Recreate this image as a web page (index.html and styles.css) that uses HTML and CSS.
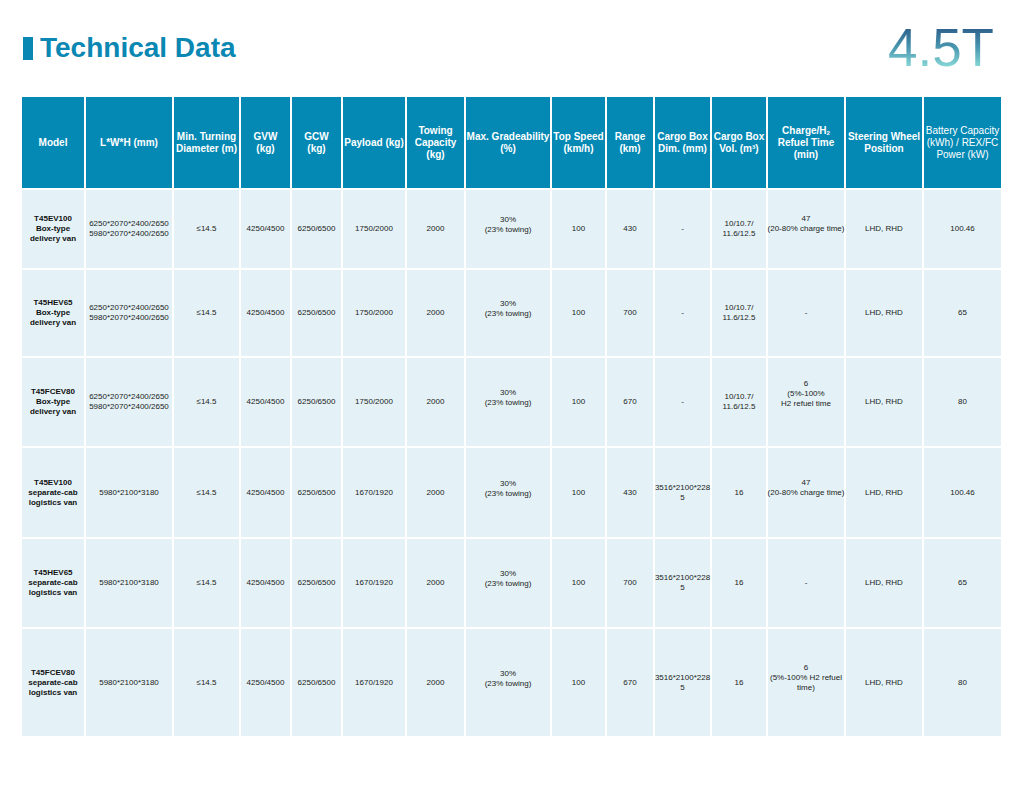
FILE: index.html
```html
<!DOCTYPE html>
<html lang="en">
<head>
<meta charset="utf-8">
<title>Technical Data 4.5T</title>
<link rel="stylesheet" href="styles.css">
</head>
<body>
<div class="page">
  <header class="page-head">
    <h1 class="title"><span class="title-bar"></span>Technical Data</h1>
    <div class="tonnage">4.5T</div>
  </header>

  <div class="spec" role="table">
    <div class="th">Model</div>
    <div class="th">L*W*H (mm)</div>
    <div class="th">Min. Turning<br>Diameter (m)</div>
    <div class="th">GVW<br>(kg)</div>
    <div class="th">GCW<br>(kg)</div>
    <div class="th">Payload (kg)</div>
    <div class="th">Towing<br>Capacity<br>(kg)</div>
    <div class="th">Max. Gradeability<br>(%)</div>
    <div class="th">Top Speed<br>(km/h)</div>
    <div class="th">Range<br>(km)</div>
    <div class="th">Cargo Box<br>Dim. (mm)</div>
    <div class="th">Cargo Box<br>Vol. (m³)</div>
    <div class="th"><span>Charge/H<sub>2</sub><br>Refuel Time<br>(min)</span></div>
    <div class="th">Steering Wheel<br>Position</div>
    <div class="th light">Battery Capacity<br>(kWh) / REX/FC<br>Power (kW)</div>

    <div class="td model">T45EV100<br>Box-type<br>delivery van</div>
    <div class="td">6250*2070*2400/2650<br>5980*2070*2400/2650</div>
    <div class="td">≤14.5</div>
    <div class="td">4250/4500</div>
    <div class="td">6250/6500</div>
    <div class="td">1750/2000</div>
    <div class="td">2000</div>
    <div class="td lift-s">30%<br>(23% towing)</div>
    <div class="td">100</div>
    <div class="td">430</div>
    <div class="td">-</div>
    <div class="td">10/10.7/<br>11.6/12.5</div>
    <div class="td lift">47<br>(20-80% charge time)</div>
    <div class="td">LHD, RHD</div>
    <div class="td">100.46</div>

    <div class="td model">T45HEV65<br>Box-type<br>delivery van</div>
    <div class="td">6250*2070*2400/2650<br>5980*2070*2400/2650</div>
    <div class="td">≤14.5</div>
    <div class="td">4250/4500</div>
    <div class="td">6250/6500</div>
    <div class="td">1750/2000</div>
    <div class="td">2000</div>
    <div class="td lift-s">30%<br>(23% towing)</div>
    <div class="td">100</div>
    <div class="td">700</div>
    <div class="td">-</div>
    <div class="td">10/10.7/<br>11.6/12.5</div>
    <div class="td">-</div>
    <div class="td">LHD, RHD</div>
    <div class="td">65</div>

    <div class="td model">T45FCEV80<br>Box-type<br>delivery van</div>
    <div class="td">6250*2070*2400/2650<br>5980*2070*2400/2650</div>
    <div class="td">≤14.5</div>
    <div class="td">4250/4500</div>
    <div class="td">6250/6500</div>
    <div class="td">1750/2000</div>
    <div class="td">2000</div>
    <div class="td lift-s">30%<br>(23% towing)</div>
    <div class="td">100</div>
    <div class="td">670</div>
    <div class="td">-</div>
    <div class="td">10/10.7/<br>11.6/12.5</div>
    <div class="td lift-l">6<br>(5%-100%<br>H2 refuel time</div>
    <div class="td">LHD, RHD</div>
    <div class="td">80</div>

    <div class="td model">T45EV100<br>separate-cab<br>logistics van</div>
    <div class="td">5980*2100*3180</div>
    <div class="td">≤14.5</div>
    <div class="td">4250/4500</div>
    <div class="td">6250/6500</div>
    <div class="td">1670/1920</div>
    <div class="td">2000</div>
    <div class="td lift-s">30%<br>(23% towing)</div>
    <div class="td">100</div>
    <div class="td">430</div>
    <div class="td">3516*2100*228<br>5</div>
    <div class="td">16</div>
    <div class="td lift">47<br>(20-80% charge time)</div>
    <div class="td">LHD, RHD</div>
    <div class="td">100.46</div>

    <div class="td model">T45HEV65<br>separate-cab<br>logistics van</div>
    <div class="td">5980*2100*3180</div>
    <div class="td">≤14.5</div>
    <div class="td">4250/4500</div>
    <div class="td">6250/6500</div>
    <div class="td">1670/1920</div>
    <div class="td">2000</div>
    <div class="td lift-s">30%<br>(23% towing)</div>
    <div class="td">100</div>
    <div class="td">700</div>
    <div class="td">3516*2100*228<br>5</div>
    <div class="td">16</div>
    <div class="td">-</div>
    <div class="td">LHD, RHD</div>
    <div class="td">65</div>

    <div class="td model">T45FCEV80<br>separate-cab<br>logistics van</div>
    <div class="td">5980*2100*3180</div>
    <div class="td">≤14.5</div>
    <div class="td">4250/4500</div>
    <div class="td">6250/6500</div>
    <div class="td">1670/1920</div>
    <div class="td">2000</div>
    <div class="td lift-s">30%<br>(23% towing)</div>
    <div class="td">100</div>
    <div class="td">670</div>
    <div class="td">3516*2100*228<br>5</div>
    <div class="td">16</div>
    <div class="td lift">6<br>(5%-100% H2 refuel<br>time)</div>
    <div class="td">LHD, RHD</div>
    <div class="td">80</div>
  </div>
</div>
</body>
</html>
```
FILE: styles.css
```css
html, body {
  margin: 0;
  padding: 0;
  background: #ffffff;
}

body {
  font-family: "Liberation Sans", Arial, sans-serif;
}

.page {
  width: 1024px;
  height: 796px;
}

.page-head {
  box-sizing: border-box;
  height: 97px;
  padding: 21px 30px 0 23px;
  display: flex;
  justify-content: space-between;
  align-items: flex-start;
}

.title {
  margin: 13px 0 0;
  display: flex;
  align-items: center;
  gap: 7px;
  font-size: 28px;
  line-height: 28px;
  font-weight: 700;
  color: #0a87b2;
}

.title-bar {
  width: 10px;
  height: 23px;
  background: #0a87b2;
}

.tonnage {
  font-size: 53px;
  line-height: 53px;
  font-weight: 400;
  background: linear-gradient(to bottom, #2c5f8a 12%, #4a97b0 50%, #8adbd9 88%);
  -webkit-background-clip: text;
  background-clip: text;
  color: transparent;
}

.spec {
  margin-left: 22px;
  width: 979px;
  display: grid;
  grid-template-columns: 62px 86px 65px 49px 49px 62px 57px 84px 53px 46px 55px 54px 76px 76px 77px;
  grid-template-rows: 91px 78px 86px 88px 89px 88px 107px;
  gap: 2px;
  background: #ffffff;
}

.th,
.td {
  display: flex;
  align-items: center;
  justify-content: center;
  text-align: center;
  white-space: nowrap;
}

.th {
  background: #0389b4;
  color: #ffffff;
  font-size: 10px;
  line-height: 12px;
  font-weight: 700;
}

.th.light {
  font-weight: 400;
}

.th sub {
  font-size: 6px;
  line-height: 0;
  vertical-align: -1px;
}

.td {
  background: #e4f2f7;
  color: #222222;
  font-size: 8px;
  line-height: 10px;
}

.td.model {
  font-weight: 700;
  color: #111111;
}

.td.lift-s {
  padding-bottom: 8px;
}

.td.lift {
  padding-bottom: 10px;
}

.td.lift-l {
  padding-bottom: 17px;
}
```
